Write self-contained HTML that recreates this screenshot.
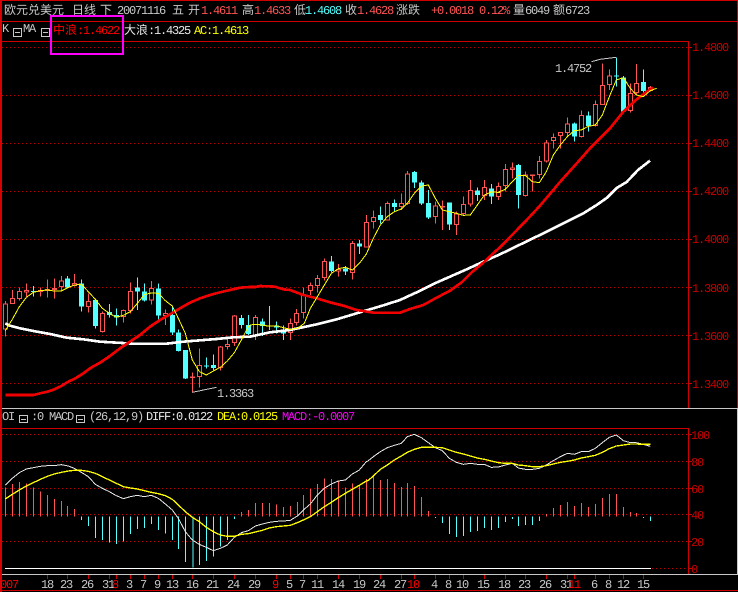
<!DOCTYPE html>
<html><head><meta charset="utf-8"><style>
html,body{margin:0;padding:0;background:#000;width:738px;height:592px;overflow:hidden}
svg{display:block}
text{font-family:"Liberation Mono","WenQuanYi Zen Hei",monospace;font-size:12px;letter-spacing:-1.2px;white-space:pre;text-rendering:geometricPrecision}
.c{font-family:"WenQuanYi Zen Hei","Noto Sans CJK SC",sans-serif;letter-spacing:0}
.g{fill:#c8c8c8}.r{fill:#ff5454}.y{fill:#ffff00}.b{fill:#54ffff}.w{fill:#e8e8e8}.d{fill:#c80000}.R{fill:#ff0000}.m{fill:#ff00ff}
</style></head><body>
<svg width="738" height="592" viewBox="0 0 738 592" xmlns="http://www.w3.org/2000/svg">
<rect width="738" height="592" fill="#000"/>
<g shape-rendering="crispEdges" fill="none">
<path d="M0 .5H738M0 21.5H738M2 41.5H688.5M0 590.5H738M2 428.5H688.5" stroke="#d00000"/>
<path d="M1 0V592" stroke="#d80000" stroke-width="2"/>
<path d="M688.5 41V408M688.5 428V574M737.5 0V408" stroke="#d00000"/>
<path d="M2 408.5H738M737.5 408V574M2 574.5H738" stroke="#c8c8c8"/>
<path d="M2 47.5H688M2 95.5H688M2 143.5H688M2 191.5H688M2 239.5H688M2 287.5H688M2 335.5H688M2 383.5H688M2 434.5H688M2 461.5H688M2 488.5H688M2 514.5H688M2 541.5H688M652 568.5H688" stroke="#c00000" stroke-dasharray="1 3"/>
<path d="M689 47.5h3M689 95.5h3M689 143.5h3M689 191.5h3M689 239.5h3M689 287.5h3M689 335.5h3M689 383.5h3M689 434.5h3M689 461.5h3M689 488.5h3M689 514.5h3M689 541.5h3M689 568.5h3" stroke="#d00000"/>
<path d="M5 568.5H651" stroke="#fff"/>
<path d="M47.5 575v4M67.5 575v4M88.5 575v4M109.5 575v4M116.5 575v4M130.5 575v4M144.5 575v4M158.5 575v4M172.5 575v4M192.5 575v4M213.5 575v4M234.5 575v4M255.5 575v4M276.5 575v4M290.5 575v4M303.5 575v4M317.5 575v4M338.5 575v4M359.5 575v4M380.5 575v4M401.5 575v4M414.5 575v4M435.5 575v4M449.5 575v4M463.5 575v4M484.5 575v4M505.5 575v4M525.5 575v4M546.5 575v4M567.5 575v4M574.5 575v4M595.5 575v4M609.5 575v4M623.5 575v4M643.5 575v4" stroke="#d00000"/>
<rect x="51" y="16" width="72" height="38" stroke="#ff00ff" stroke-width="2"/>
<path d="M13.5 28.5h8v8h-8zM15 32.5h5M41.5 28.5h8v8h-8zM43 32.5h5M19.5 415.5h8v7h-8zM21 419.5h5M76.5 415.5h8v7h-8zM78 419.5h5" stroke="#c8c8c8"/>
</g>

<!-- main candles: left -->
<g transform="translate(0,260) scale(.33333)" stroke-width="3" shape-rendering="crispEdges">
<path fill="none" stroke="#ff5454" d="M16.5 123V230M37.5 90V122M58.5 82V122M79.5 70V112M121.5 82V110M142.5 58V112M163.5 55V115M184.5 48V92M223.5 42V80M265.5 100V158M307.5 155V218M370.5 148V188M391.5 68V160M454.5 63V133M496.5 148V195M577.5 337V397M598.5 265V383M661.5 258V332M682.5 235V268M703.5 165V258"/>
<path fill="#000" stroke="#ff5454" d="M10.5 132h12V207h-12zM31.5 115h12V131h-12zM52.5 94h12V116h-12zM73.5 91h12V96h-12zM115.5 92h12V95h-12zM136.5 89h12V92h-12zM157.5 85h12V88h-12zM178.5 63h12V80h-12zM217.5 71h12V76h-12zM259.5 124h12V140h-12zM301.5 160h12V214h-12zM364.5 152h12V170h-12zM385.5 94h12V152h-12zM448.5 85h12V120h-12zM490.5 160h12V166h-12zM571.5 351h12V353h-12zM592.5 316h12V350h-12zM655.5 261h12V322h-12zM676.5 253h12V260h-12zM697.5 168h12V248h-12z"/>
<path fill="none" stroke="#54ffff" d="M100.5 78V110M202.5 48V85M244.5 58V155M286.5 115V205M328.5 132V172M349.5 145V197M412.5 52V150M433.5 70V125M475.5 70V183M517.5 140V225M535.5 208V275M556.5 270V357M619.5 292V325M640.5 283V330M724.5 165V205M745.5 165V225"/>
<path fill="#54ffff" stroke="none" d="M93 93h15V96h-15zM195 55h15V82h-15zM237 70h15V140h-15zM279 120h15V198h-15zM321 156h15V165h-15zM342 165h15V173h-15zM405 82h15V95h-15zM426 94h15V122h-15zM468 85h15V167h-15zM510 165h15V218h-15zM528 218h15V273h-15zM549 270h15V355h-15zM612 316h15V319h-15zM633 315h15V324h-15zM717 174h15V195h-15zM738 195h15V222h-15z"/>
</g>
<!-- main candles: middle -->
<g transform="translate(250,160) scale(.33333)" stroke-width="3" shape-rendering="crispEdges">
<path fill="none" stroke="#ff5454" d="M16.5 465V540M121.5 475V540M139.5 447V497M160.5 382V476M181.5 368V405M202.5 345V398M223.5 295V362M265.5 312V350M307.5 243V358M349.5 165V262M370.5 152V205M412.5 125V182M454.5 100V150M472.5 33V135M556.5 125V190M577.5 122V210M619.5 155V225M640.5 110V165M661.5 60V140M703.5 60V120M745.5 68V120"/>
<path fill="#000" stroke="#ff5454" d="M10.5 472h12V525h-12zM115.5 490h12V518h-12zM133.5 460h12V488h-12zM154.5 405h12V458h-12zM175.5 376h12V391h-12zM196.5 355h12V376h-12zM217.5 304h12V353h-12zM259.5 328h12V333h-12zM301.5 250h12V338h-12zM343.5 187h12V261h-12zM364.5 172h12V184h-12zM406.5 130h12V180h-12zM448.5 130h12V139h-12zM466.5 42h12V130h-12zM550.5 138h12V170h-12zM571.5 139h12V141h-12zM613.5 162h12V194h-12zM634.5 133h12V160h-12zM655.5 91h12V132h-12zM697.5 82h12V107h-12zM739.5 79h12V110h-12z"/>
<path fill="none" stroke="#54ffff" d="M37.5 475V528M58.5 438V510M79.5 485V520M100.5 497V540M244.5 288V338M286.5 318V345M328.5 240V282M391.5 140V190M433.5 118V155M493.5 33V84M514.5 62V135M535.5 90V177M598.5 127V210M682.5 82V123M724.5 72V132"/>
<path fill="#54ffff" stroke="none" d="M30 484h15V498h-15zM51 497h15V500h-15zM72 497h15V503h-15zM93 510h15V521h-15zM237 304h15V333h-15zM279 326h15V335h-15zM321 250h15V260h-15zM384 165h15V180h-15zM426 129h15V141h-15zM486 36h15V68h-15zM507 67h15V130h-15zM528 129h15V172h-15zM591 127h15V194h-15zM675 91h15V105h-15zM717 85h15V110h-15z"/>
</g>
<!-- main candles: right -->
<g transform="translate(490,40) scale(.33333)" stroke-width="3" shape-rendering="crispEdges">
<path fill="none" stroke="#ff5454" d="M46.5 372V455M67.5 367V415M106.5 395V470M127.5 403V455M148.5 348V415M169.5 300V367M190.5 280V325M211.5 276V325M232.5 232V290M274.5 212V292M316.5 182V260M337.5 70V195M358.5 88V150M421.5 130V218M439.5 72V165M481.5 138V155"/>
<path fill="#000" stroke="#ff5454" d="M40.5 388h12V436h-12zM61.5 384h12V388h-12zM100.5 405h12V466h-12zM121.5 405h12V407h-12zM142.5 364h12V403h-12zM163.5 309h12V363h-12zM184.5 293h12V301h-12zM205.5 278h12V286h-12zM226.5 252h12V277h-12zM268.5 226h12V290h-12zM310.5 193h12V257h-12zM331.5 136h12V193h-12zM352.5 108h12V133h-12zM415.5 160h12V212h-12zM433.5 130h12V158h-12zM475.5 142h12V152h-12z"/>
<path fill="none" stroke="#54ffff" d="M85.5 372V505M253.5 247V305M295.5 215V275M379.5 52V140M400.5 108V217M460.5 88V158"/>
<path fill="#54ffff" stroke="none" d="M78 375h15V465h-15zM246 250h15V290h-15zM288 226h15V258h-15zM372 107h15V109h-15zM393 112h15V214h-15zM453 126h15V153h-15z"/>
</g>

<!-- main lines -->
<g fill="none" stroke-linejoin="round" shape-rendering="crispEdges">
<g transform="translate(0,260) scale(.33333)">
<polyline stroke="#fff" stroke-width="8" points="16,190 30,197 60,205 100,213 150,222 200,233 250,238 300,245 350,248 400,251 500,251 550,245 600,241 650,237 700,232 750,230"/>
<polyline stroke="#f00000" stroke-width="8" points="16,405 100,405 121,400 142,395 163,388 184,378 205,365 226,355 250,340 270,325 300,308 330,288 360,265 390,245 420,225 450,200 480,180 510,163 540,145 570,128 600,115 630,105 660,97 690,90 720,83 750,81"/>
<polyline stroke="#ffff00" stroke-width="3" points="16,212 37,178 58,140 79,112 100,97 121,92 142,90 163,93 184,93 202,84 223,75 244,73 265,95 286,118 307,145 328,160 349,172 370,166 391,155 412,130 433,104 454,99 475,100 496,122 517,138 535,175 556,220 577,300 598,335 619,345 640,333 661,322 682,303 703,278 724,240 745,200 750,195"/>
</g>
<g transform="translate(250,160) scale(.33333)">
<polyline stroke="#fff" stroke-width="8" points="0,530 60,517 120,510 200,493 260,478 320,460 400,436 450,420 500,397 550,372 600,350 650,328 700,305 750,283"/>
<polyline stroke="#f00000" stroke-width="8" points="0,381 16,381 30,378 75,380 100,388 120,390 160,405 200,415 240,427 280,437 320,450 370,458 450,458 480,447 520,435 560,413 600,392 635,367 665,337 700,308 735,275 750,262"/>
<polyline stroke="#ffff00" stroke-width="3" points="0,495 16,493 37,495 58,499 79,497 100,503 121,508 142,505 163,490 181,445 202,410 223,375 244,340 265,326 286,322 307,330 328,310 349,282 370,235 391,195 412,170 433,155 454,147 472,130 493,100 514,78 535,75 556,115 577,150 598,155 619,160 640,166 661,165 682,135 703,105 724,96 745,97 750,97"/>
</g>
<g transform="translate(490,40) scale(.33333)">
<polyline stroke="#fff" stroke-width="8" points="30,643 100,609 160,580 210,555 240,540 280,520 320,495 350,474 380,444 410,426 444,390 480,362"/>
<polyline stroke="#f00000" stroke-width="8" points="30,622 110,540 150,497 210,426 261,369 300,325 360,265 400,215 440,178 470,155 490,143"/>
<polyline stroke="#ffff00" stroke-width="3" points="2,455 23,457 46,448 67,425 85,406 106,406 127,425 148,428 169,395 190,345 211,315 232,290 253,272 274,270 295,259 316,255 337,225 358,170 379,120 400,113 421,145 439,165 460,170 481,152 500,145"/>
<polyline stroke="#c8c8c8" stroke-width="3" points="305,65 330,58 378,52"/>
</g>
<polyline transform="translate(0,260) scale(.33333)" stroke="#c8c8c8" stroke-width="3" points="577,397 620,388 650,382"/>
</g>

<!-- MACD bars and lines -->
<g transform="translate(0,400) scale(.33333)" stroke-width="3" fill="none" shape-rendering="crispEdges">
<path stroke="#ff5454" d="M16.5 350V262M37.5 350V252M58.5 350V246M79.5 350V250M100.5 350V262M121.5 350V274M142.5 350V285M163.5 350V297M184.5 350V303M202.5 350V318M223.5 350V327M724.5 350V336M745.5 350V330M766.5 350V309M787.5 350V309M808.5 350V309M829.5 350V313M850.5 350V321M871.5 350V318M892.5 350V306M910.5 350V285M931.5 350V267M952.5 350V252M973.5 350V235M994.5 350V237M1015.5 350V245M1036.5 350V262M1057.5 350V250M1078.5 350V255M1099.5 350V237"/>
<path stroke="#54ffff" d="M244.5 350V360M265.5 350V378M286.5 350V414M307.5 350V420M328.5 350V428M349.5 350V432M370.5 350V424M391.5 350V402M412.5 350V387M433.5 350V384M454.5 350V372M475.5 350V390M496.5 350V400M517.5 350V420M535.5 350V447M556.5 350V486M578.5 350V503M598.5 350V495M619.5 350V483M640.5 350V470M661.5 350V439M682.5 350V420M703.5 350V357"/>
</g>
<g transform="translate(368,400) scale(.33333)" stroke-width="3" fill="none" shape-rendering="crispEdges">
<path stroke="#ff5454" d="M16.5 350V230M37.5 350V240M58.5 350V237M79.5 350V249M100.5 350V261M118.5 350V249M139.5 350V258M160.5 350V291M181.5 350V333M535.5 350V342M556.5 350V324M577.5 350V315M598.5 350V306M619.5 350V318M640.5 350V309M661.5 350V321M682.5 350V312M703.5 350V294M724.5 350V282M745.5 350V282M766.5 350V321M787.5 350V336M805.5 350V339"/>
<path stroke="#54ffff" d="M202.5 351V354M223.5 350V369M244.5 350V402M265.5 350V411M286.5 350V408M307.5 350V396M328.5 350V393M349.5 350V384M370.5 350V390M391.5 350V384M412.5 350V366M433.5 351V357M451.5 350V378M472.5 350V375M493.5 350V375M514.5 350V363M826.5 351V354M847.5 350V363"/>
</g>
<g fill="none" stroke-width="3" stroke-linejoin="round" shape-rendering="crispEdges">
<g transform="translate(0,400) scale(.33333)">
<polyline stroke="#e8e8e8" points="16,255 37,235 58,218 79,207 100,203 121,199 142,197 163,197 184,194 205,198 223,205 244,217 265,230 286,253 307,265 328,275 349,287 370,296 391,290 412,286 433,290 454,286 475,295 496,312 517,330 535,355 556,395 577,420 598,433 619,442 640,452 661,445 682,435 703,412 724,398 745,392 766,378 787,372 808,367 829,364 850,363 871,361 892,348 910,330 931,312 952,285 973,265 994,252 1015,243 1036,240 1057,222 1078,210 1099,185 1104,183"/>
<polyline stroke="#ffff00" stroke-width="4" points="16,297 37,283 58,270 79,258 100,248 121,238 142,229 163,222 184,217 205,213 223,211 244,211 265,214 286,220 307,230 328,240 349,250 370,260 391,264 412,267 433,272 454,277 475,281 496,287 517,298 535,315 556,335 577,352 598,365 619,382 640,395 661,405 682,409 703,409 724,403 745,401 766,396 787,391 808,384 829,380 850,378 871,376 892,368 910,360 931,350 952,335 973,320 994,307 1015,293 1036,280 1057,268 1078,256 1099,243 1104,242"/>
</g>
<g transform="translate(368,400) scale(.33333)">
<polyline stroke="#e8e8e8" points="0,183 16,170 37,155 58,143 79,136 100,130 118,110 139,103 160,113 181,128 202,143 223,152 244,175 265,187 286,193 307,190 328,193 349,193 370,202 391,201 412,195 433,190 451,204 472,208 493,208 514,205 535,195 556,182 577,170 598,160 619,163 640,155 661,155 682,145 703,128 724,112 745,105 766,122 787,128 805,128 826,133 847,139"/>
<polyline stroke="#ffff00" stroke-width="4" points="0,242 16,228 37,208 58,195 79,180 100,168 118,157 139,148 160,142 181,142 202,142 223,143 244,150 265,157 286,162 307,168 328,174 349,178 370,183 391,188 412,190 433,190 451,195 472,197 493,200 514,200 535,197 556,192 577,187 598,184 619,180 640,174 661,170 682,166 703,157 724,146 745,138 766,135 787,132 805,132 826,133 847,133"/>
</g>
</g>

<!-- header row -->
<text class="c g" x="4" y="14">欧元兑美元</text>
<text class="c g" x="72" y="14">日线</text>
<text class="c g" x="100" y="14">下</text>
<text class="g" x="117" y="14">20071116</text>
<text class="c g" x="172" y="14">五</text>
<text class="c g" x="188" y="14">开</text>
<text class="r" x="201" y="14">1.4611</text>
<text class="c g" x="242" y="14">高</text>
<text class="r" x="254" y="14">1.4633</text>
<text class="c g" x="294" y="14">低</text>
<text class="b" x="305" y="14">1.4608</text>
<text class="c g" x="345" y="14">收</text>
<text class="r" x="357" y="14">1.4628</text>
<text class="c g" x="396" y="14">涨跌</text>
<text class="r" x="431" y="14">+0.0018</text>
<text class="r" x="479" y="14">0.12%</text>
<text class="c g" x="513" y="14">量</text>
<text class="g" x="525" y="14">6049</text>
<text class="c g" x="553" y="14">额</text>
<text class="g" x="565" y="14">6723</text>

<!-- second row -->
<text class="g" x="2" y="32">K</text>
<text class="g" x="23" y="32">MA</text>
<text class="c R" x="53" y="34">中浪</text>
<text class="R" x="77" y="34">:1.4622</text>
<text class="c w" x="124" y="34">大浪</text>
<text class="w" x="148" y="34">:1.4325</text>
<text class="y" x="194" y="34">AC:1.4613</text>

<!-- axis labels -->
<text class="d" x="692" y="51">1.4800</text>
<text class="d" x="692" y="99">1.4600</text>
<text class="d" x="692" y="147">1.4400</text>
<text class="d" x="692" y="195">1.4200</text>
<text class="d" x="692" y="243">1.4000</text>
<text class="d" x="692" y="292">1.3800</text>
<text class="d" x="692" y="340">1.3600</text>
<text class="d" x="692" y="388">1.3400</text>
<text class="d" x="691" y="439">100</text>
<text class="d" x="691" y="466">80</text>
<text class="d" x="691" y="493">60</text>
<text class="d" x="691" y="519">40</text>
<text class="d" x="691" y="546">20</text>
<text class="d" x="691" y="573">0</text>

<text class="g" x="555" y="72">1.4752</text>
<text class="g" x="217" y="397">1.3363</text>

<!-- MACD title -->
<text class="g" x="2" y="420">OI</text>
<text class="g" x="31" y="420">:0 MACD</text>
<text class="g" x="89" y="420">(26,12,9)</text>
<text class="w" x="146" y="420">DIFF:0.0122</text>
<text class="y" x="217" y="420">DEA:0.0125</text>
<text class="m" x="282" y="420">MACD:-0.0007</text>

<!-- date axis -->
<text class="R" x="0" y="588">007</text>
<text class="g" x="41" y="588">18</text><text class="g" x="60" y="588">23</text><text class="g" x="81" y="588">26</text><text class="g" x="102" y="588">31</text>
<text class="R" x="112" y="588">8</text>
<text class="g" x="126" y="588">3</text><text class="g" x="140" y="588">7</text><text class="g" x="154" y="588">9</text><text class="g" x="166" y="588">13</text><text class="g" x="186" y="588">16</text><text class="g" x="206" y="588">21</text><text class="g" x="227" y="588">24</text><text class="g" x="248" y="588">29</text>
<text class="R" x="272" y="588">9</text>
<text class="g" x="286" y="588">5</text><text class="g" x="299" y="588">7</text><text class="g" x="311" y="588">11</text><text class="g" x="332" y="588">14</text><text class="g" x="353" y="588">19</text><text class="g" x="373" y="588">24</text><text class="g" x="394" y="588">27</text>
<text class="R" x="407" y="588">10</text>
<text class="g" x="431" y="588">4</text><text class="g" x="445" y="588">8</text><text class="g" x="456" y="588">10</text><text class="g" x="477" y="588">15</text><text class="g" x="498" y="588">18</text><text class="g" x="518" y="588">23</text><text class="g" x="539" y="588">26</text><text class="g" x="560" y="588">31</text>
<text class="R" x="568" y="588">11</text>
<text class="g" x="591" y="588">6</text><text class="g" x="605" y="588">8</text><text class="g" x="617" y="588">12</text><text class="g" x="637" y="588">15</text>
</svg>
</body></html>
